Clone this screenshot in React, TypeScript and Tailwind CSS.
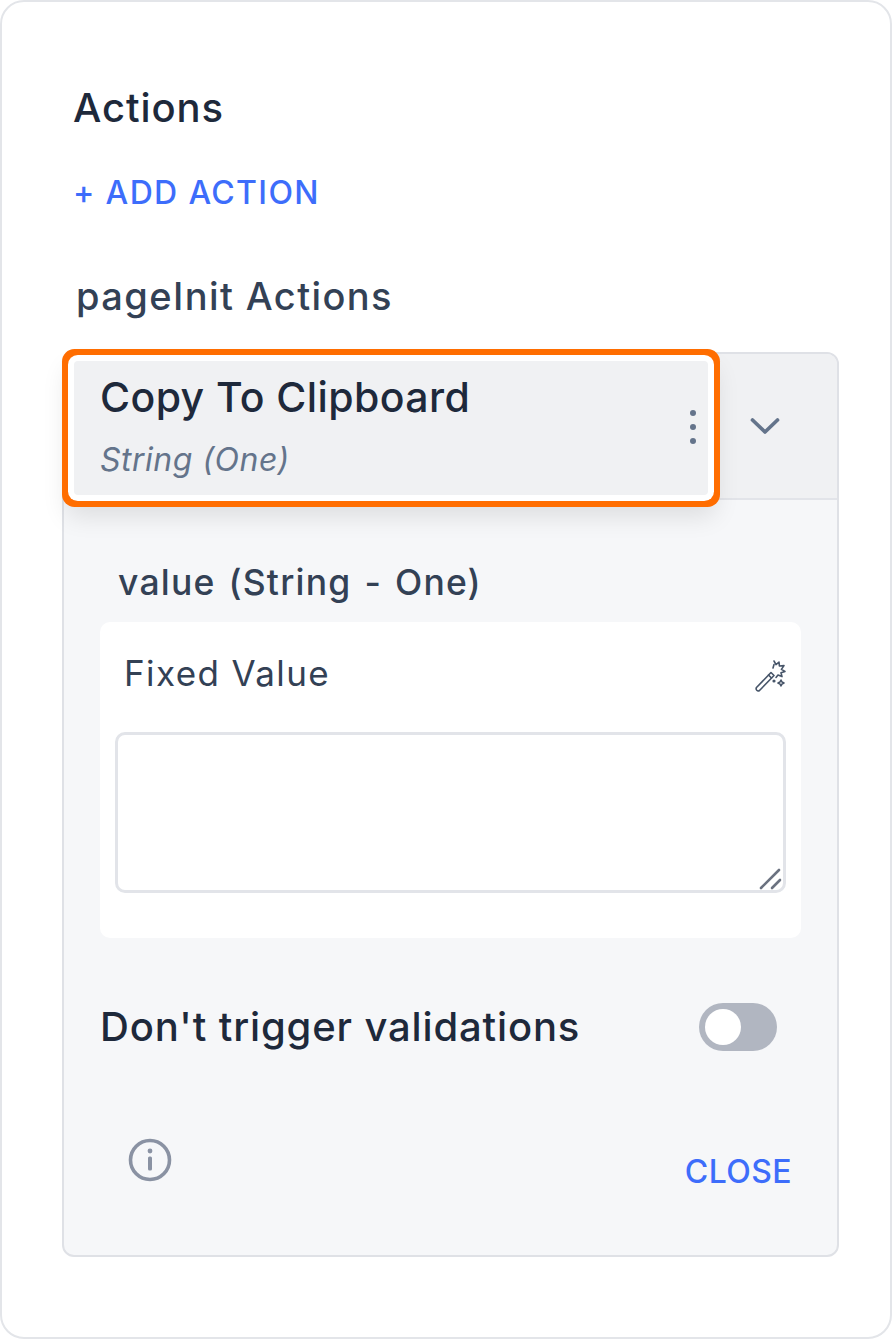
import React from "react";

function Wand() {
  return (
    <svg width="34" height="34" viewBox="0 0 34 34" fill="none" stroke="#475569" strokeWidth="1.6" strokeLinejoin="round" strokeLinecap="round">
      <path d="M3.5 28.5 L18 13.5 L21 16.5 L6.5 31.5 Q5 32.5 3.8 31.3 Q2.6 30 3.5 28.5 Z" />
      <path d="M15.5 16 L18.5 19" />
      <path d="M21 2 L23 5.6 L26 3 L26.4 7 L31 6.6 L28.4 10.4 L32 12.4 L28 13.8 L29 17.6 L25 16 L23 18.5" />
      <path d="M20 9 L21 5.5" />
      <path d="M28 21 L29 23 L31 24 L29 25 L28 27 L27 25 L25 24 L27 23 Z" />
      <circle cx="21" cy="22" r="0.8" />
    </svg>
  );
}

function Grip() {
  return (
    <svg width="8" height="36" viewBox="0 0 8 36" fill="#64748b" aria-hidden="true">
      <circle cx="4" cy="4" r="3" />
      <circle cx="4" cy="18" r="3" />
      <circle cx="4" cy="32" r="3" />
    </svg>
  );
}

function Chevron() {
  return (
    <svg width="30" height="18" viewBox="0 0 30 18" fill="none" stroke="#64748b" strokeWidth="3.7" strokeLinecap="round" strokeLinejoin="round" aria-hidden="true">
      <path d="M2.5 3 L15 15 L27.5 3" />
    </svg>
  );
}

function Info() {
  return (
    <svg width="44" height="44" viewBox="0 0 44 44" fill="none" aria-hidden="true">
      <circle cx="22" cy="22" r="19.5" stroke="#8a92a3" strokeWidth="3.6" />
      <circle cx="22" cy="13" r="2.4" fill="#8a92a3" />
      <rect x="20" y="18.5" width="4" height="14" rx="1.5" fill="#8a92a3" />
    </svg>
  );
}

function Resize() {
  return (
    <svg width="24" height="22" viewBox="0 0 24 22" fill="none" stroke="#6b7280" strokeWidth="2.6" strokeLinecap="round" className="absolute right-0 bottom-0" aria-hidden="true">
      <path d="M2 20 L20 2" />
      <path d="M13 20 L21 12" />
    </svg>
  );
}

export default function App() {
  return (
    <div className="w-[892px] h-[1339px] bg-white border-2 border-[#e3e5e9] rounded-[24px] pl-[60px] pr-[51px] pt-[80px] text-[#1e293b] font-['Inter',sans-serif] overflow-hidden">
      <h2 className="ml-[11px] text-[40px] leading-[52px] font-medium tracking-[0.9px] text-[#1e293b]">Actions</h2>
      <button className="block ml-[11px] mt-[37px] text-[32px] leading-[44px] font-medium tracking-[1.35px] text-[#3d6dfb]">+ ADD ACTION</button>
      <div className="ml-[14px] mt-[56px] text-[38px] leading-[50px] font-medium tracking-[1.4px] text-[#334155]">pageInit Actions</div>

      <div className="mt-[31px] h-[905px] rounded-[12px] border-2 border-[#dfe1e6] bg-[#f6f7f9] flex flex-col">
        <div className="h-[146px] shrink-0 bg-[#f0f1f3] border-b-2 border-[#e2e4e9] rounded-t-[10px] flex pl-[10px] pt-[7px]">
          <div className="w-[634px] h-[134px] bg-[#f0f1f3] rounded-[4px] shadow-[0_0_0_6px_#ffffff,0_0_0_12px_#ff6d00,0_14px_24px_8px_rgba(0,0,0,0.10)] pl-[26px] pr-[11px] flex items-center justify-between relative z-10">
            <div className="pb-[5px]">
              <div className="text-[41px] leading-[56px] font-medium tracking-[0.4px] text-[#1e293b]">Copy To Clipboard</div>
              <div className="mt-[13px] text-[32px] leading-[44px] italic tracking-[0.5px] text-[#64748b]">String (One)</div>
            </div>
            <div className="-mt-[2px]"><Grip /></div>
          </div>
          <div className="ml-[42px] mt-[56px]"><Chevron /></div>
        </div>

        <div className="pl-[36px] pr-[36px] flex-1 flex flex-col">
          <div className="ml-[18px] mt-[58px] text-[35.5px] leading-[50px] font-medium tracking-[1.2px] [word-spacing:2.3px] text-[#334155]">value (String - One)</div>
          <div className="mt-[14px] h-[316px] bg-white rounded-[10px] px-[15px] flex flex-col">
            <div className="flex items-start justify-between">
              <div className="ml-[9px] mt-[28px] text-[35px] leading-[46px] tracking-[1.4px] text-[#334155]">Fixed Value</div>
              <div className="mt-[37px] -mr-[1px]"><Wand /></div>
            </div>
            <div className="relative mt-[36px] h-[161px] rounded-[10px] border-[3px] border-[#e2e4e9] bg-white">
              <Resize />
            </div>
          </div>
          <div className="mt-[59px] flex items-center justify-between pr-[24px]">
            <div className="text-[40px] leading-[60px] font-medium tracking-[0.85px] text-[#1e293b]">Don't trigger validations</div>
            <div className="w-[78px] h-[48px] rounded-full bg-[#b1b6c1] p-[6px]">
              <div className="w-[36px] h-[36px] rounded-full bg-white" />
            </div>
          </div>
          <div className="mt-[81px] flex items-start justify-between pl-[28px] pr-[9px]">
            <Info />
            <div className="mt-[12px] text-[32px] leading-[44px] font-medium tracking-[0.4px] text-[#3d6dfb]">CLOSE</div>
          </div>
        </div>
      </div>
    </div>
  );
}
